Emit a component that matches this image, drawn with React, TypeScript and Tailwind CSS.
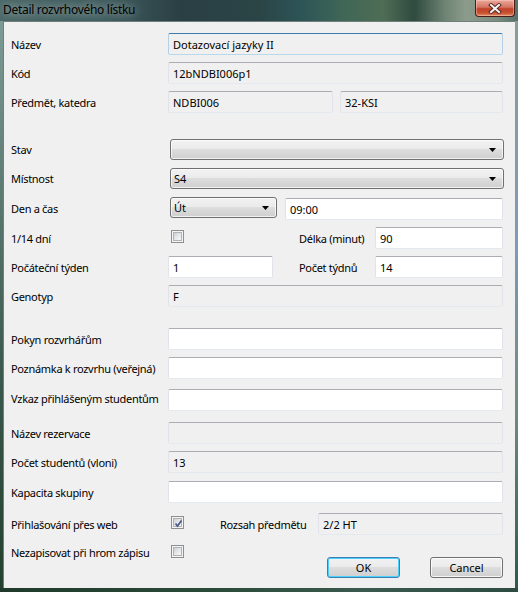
import type { ReactNode } from "react";

// Windows 7 style dialog "Detail rozvrhového lístku"

const FONT = "font-['Noto_Sans',sans-serif] text-[11px] text-black";

function TextBox({
  value,
  readOnly,
  focused,
  className = "flex-1",
}: {
  value?: string;
  readOnly?: boolean;
  focused?: boolean;
  className?: string;
}) {
  const border = focused
    ? "border-t-[#3d7bad] border-x-[#b5cfe7] border-b-[#b7d9ed]"
    : "border-t-[#abadb3] border-x-[#e2e3ea] border-b-[#e3e9ef]";
  return (
    <div
      className={`${className} h-[22px] flex items-center pl-[4px] rounded-[2px] border ${border} ${
        readOnly ? "bg-[#f0f0f0]" : "bg-white"
      }`}
    >
      <span className="leading-none whitespace-nowrap">{value}</span>
    </div>
  );
}

function Arrow() {
  return (
    <svg width="7" height="4" viewBox="0 0 7 4" className="shrink-0">
      <path d="M0 0 H7 L3.5 4 Z" fill="#000" />
    </svg>
  );
}

function Combo({ value, className = "flex-1" }: { value?: string; className?: string }) {
  return (
    <div
      className={`${className} h-[21px] flex items-center justify-between pl-[3px] pr-[7px] rounded-[3px] border border-[#707070] bg-[linear-gradient(180deg,#f2f2f2_0%,#ebebeb_45%,#dddddd_50%,#cfcfcf_100%)] shadow-[inset_0_0_0_1px_rgba(255,255,255,0.7)]`}
    >
      <span className="leading-none">{value}</span>
      <Arrow />
    </div>
  );
}

function Checkbox({ checked, className = "" }: { checked?: boolean; className?: string }) {
  return (
    <div
      className={`${className} w-[13px] h-[13px] border border-[#8e8f8f] bg-[#f4f4f4] p-[1px] shrink-0`}
    >
      <div className="relative w-full h-full border border-[#aeb3b9] bg-[linear-gradient(135deg,#cbcfd5_0%,#e6e7e9_50%,#f6f6f6_100%)]">
        {checked && (
          <svg
            width="11"
            height="11"
            viewBox="0 0 11 11"
            className="absolute -left-[1px] -top-[1px]"
          >
            <path
              d="M2.5 5.5 L4.5 8 L8.5 2.5"
              fill="none"
              stroke="#4a5a8c"
              strokeWidth="1.7"
            />
          </svg>
        )}
      </div>
    </div>
  );
}

function Button({ children, focused }: { children: ReactNode; focused?: boolean }) {
  return (
    <div
      className={`w-[73px] h-[21px] flex items-center justify-center rounded-[3px] border ${
        focused
          ? "border-[#3c7fb1] shadow-[inset_0_0_0_1px_#48d1fc]"
          : "border-[#707070] shadow-[inset_0_0_0_1px_rgba(255,255,255,0.8)]"
      } bg-[linear-gradient(180deg,#f2f2f2_0%,#ebebeb_45%,#dddddd_50%,#cfcfcf_100%)]`}
    >
      <span className="leading-none">{children}</span>
    </div>
  );
}

function Row({
  label,
  className = "",
  children,
  h = "h-[22px]",
}: {
  label: string;
  className?: string;
  children?: ReactNode;
  h?: string;
}) {
  return (
    <div className={`flex items-center ${h} ${className}`}>
      <div className="w-[157px] shrink-0 pt-[2px] whitespace-nowrap tracking-[-0.3px]">{label}</div>
      <div className="flex-1 flex items-center h-full">{children}</div>
    </div>
  );
}

function CloseButton() {
  return (
    <div className="w-[40px] h-[17px] rounded-b-[4px] border border-t-0 border-[#4a1d16] bg-[linear-gradient(180deg,#e9a99c_0%,#d57461_45%,#c0412a_55%,#c9512f_80%,#e08c66_100%)] shadow-[inset_0_0_0_1px_rgba(255,210,200,0.45)] flex items-center justify-center">
      <svg width="14" height="11" viewBox="0 0 14 11">
        <path d="M3 2 L11 9 M11 2 L3 9" stroke="#5a2a22" strokeWidth="4" strokeLinecap="square" />
        <path d="M3 2 L11 9 M11 2 L3 9" stroke="#f4f4f4" strokeWidth="2" strokeLinecap="square" />
      </svg>
    </div>
  );
}

export default function App() {
  return (
    <div className={`w-[518px] h-[592px] flex flex-col ${FONT} bg-[#243c3c]`}>
      {/* Title bar */}
      <div className="h-[21px] flex items-start justify-between pl-[3px] pr-[3px] bg-[linear-gradient(90deg,#4a6666_0%,#3f5c5e_20%,#2a3f44_35%,#2b4446_50%,#2d5456_58%,#3f6656_66%,#4f6d55_74%,#2f4a3f_80%,#6f8474_86%,#8c9c8c_90%,#7a8c80_96%,#55706a_100%)]">
        <span className="mt-[4px] leading-none text-[12px] tracking-[-0.3px] text-black [text-shadow:0_0_10px_rgba(255,255,255,0.8)]">
          Detail rozvrhového lístku
        </span>
        <CloseButton />
      </div>

      <div className="flex flex-1">
        <div className="w-[3px] bg-[linear-gradient(180deg,#7d9a96_0%,#3d5a50_60%,#24402e_100%)]" />

        {/* Client area */}
        <div className="flex-1 bg-[#f0f0f0] border-t border-l border-[#6e7f7c] pl-[7px] pr-[12px] pt-[11px] flex flex-col">
          <Row label="Název">
            <TextBox value="Dotazovací jazyky II" readOnly focused />
          </Row>
          <Row label="Kód" className="mt-[7px]">
            <TextBox value="12bNDBI006p1" readOnly />
          </Row>
          <Row label="Předmět, katedra" className="mt-[7px]">
            <TextBox value="NDBI006" readOnly className="w-[165px]" />
            <TextBox value="32-KSI" readOnly className="flex-1 ml-[7px]" />
          </Row>

          <Row label="Stav" className="mt-[26px]" h="h-[21px]">
            <Combo className="flex-1 ml-[2px] -mr-[1px]" />
          </Row>
          <Row label="Místnost" className="mt-[8px]" h="h-[21px]">
            <Combo value="S4" className="flex-1 ml-[2px] -mr-[1px]" />
          </Row>
          <Row label="Den a čas" className="mt-[8px]" h="h-[23px]">
            <div className="flex items-start w-full h-full">
              <Combo value="Út" className="w-[107px] ml-[2px]" />
              <TextBox value="09:00" className="flex-1 ml-[8px] mt-[1px]" />
            </div>
          </Row>
          <Row label="1/14 dní" className="mt-[7px]">
            <div className="w-[131px] h-full flex items-start shrink-0">
              <Checkbox className="ml-[3px] mt-[3px]" />
            </div>
            <div className="w-[76px] shrink-0 pt-[2px] whitespace-nowrap tracking-[-0.3px]">Délka (minut)</div>
            <TextBox value="90" />
          </Row>
          <Row label="Počáteční týden" className="mt-[7px]">
            <div className="w-[131px] shrink-0 flex">
              <TextBox value="1" className="w-[105px]" />
            </div>
            <div className="w-[76px] shrink-0 pt-[2px] whitespace-nowrap tracking-[-0.3px]">Počet týdnů</div>
            <TextBox value="14" />
          </Row>
          <Row label="Genotyp" className="mt-[7px]">
            <TextBox value="F" readOnly />
          </Row>

          <Row label="Pokyn rozvrhářům" className="mt-[21px]">
            <TextBox />
          </Row>
          <Row label="Poznámka k rozvrhu (veřejná)" className="mt-[7px]">
            <TextBox />
          </Row>
          <Row label="Vzkaz přihlášeným studentům" className="mt-[10px] items-start">
            <TextBox />
          </Row>
          <Row label="Název rezervace" className="mt-[11px]">
            <TextBox readOnly />
          </Row>
          <Row label="Počet studentů (vloni)" className="mt-[7px]">
            <TextBox value="13" readOnly />
          </Row>
          <Row label="Kapacita skupiny" className="mt-[8px]">
            <TextBox />
          </Row>
          <Row label="Přihlašování přes web" className="mt-[10px]">
            <div className="w-[52px] h-full flex items-start shrink-0">
              <Checkbox checked className="ml-[3px] mt-[3px]" />
            </div>
            <div className="w-[98px] shrink-0 pt-[2px] whitespace-nowrap tracking-[-0.3px]">Rozsah předmětu</div>
            <TextBox value="2/2 HT" readOnly />
          </Row>

          {/* Last row with dialog buttons */}
          <div className="flex items-start mt-[10px]">
            <div className="w-[157px] shrink-0 whitespace-nowrap tracking-[-0.3px]">Nezapisovat při hrom zápisu</div>
            <Checkbox className="ml-[3px]" />
            <div className="ml-auto flex gap-[30px] mt-[12px]">
              <Button focused>OK</Button>
              <Button>Cancel</Button>
            </div>
          </div>
        </div>

        <div className="w-[3px] bg-[linear-gradient(180deg,#8a9c98_0%,#7f9ab8_40%,#6d8a7e_70%,#2f5a46_100%)]" />
      </div>
      <div className="h-[4px] bg-[linear-gradient(90deg,#1f3a2a_0%,#2a4a38_40%,#3a5a50_70%,#2d4b40_100%)]" />
    </div>
  );
}
